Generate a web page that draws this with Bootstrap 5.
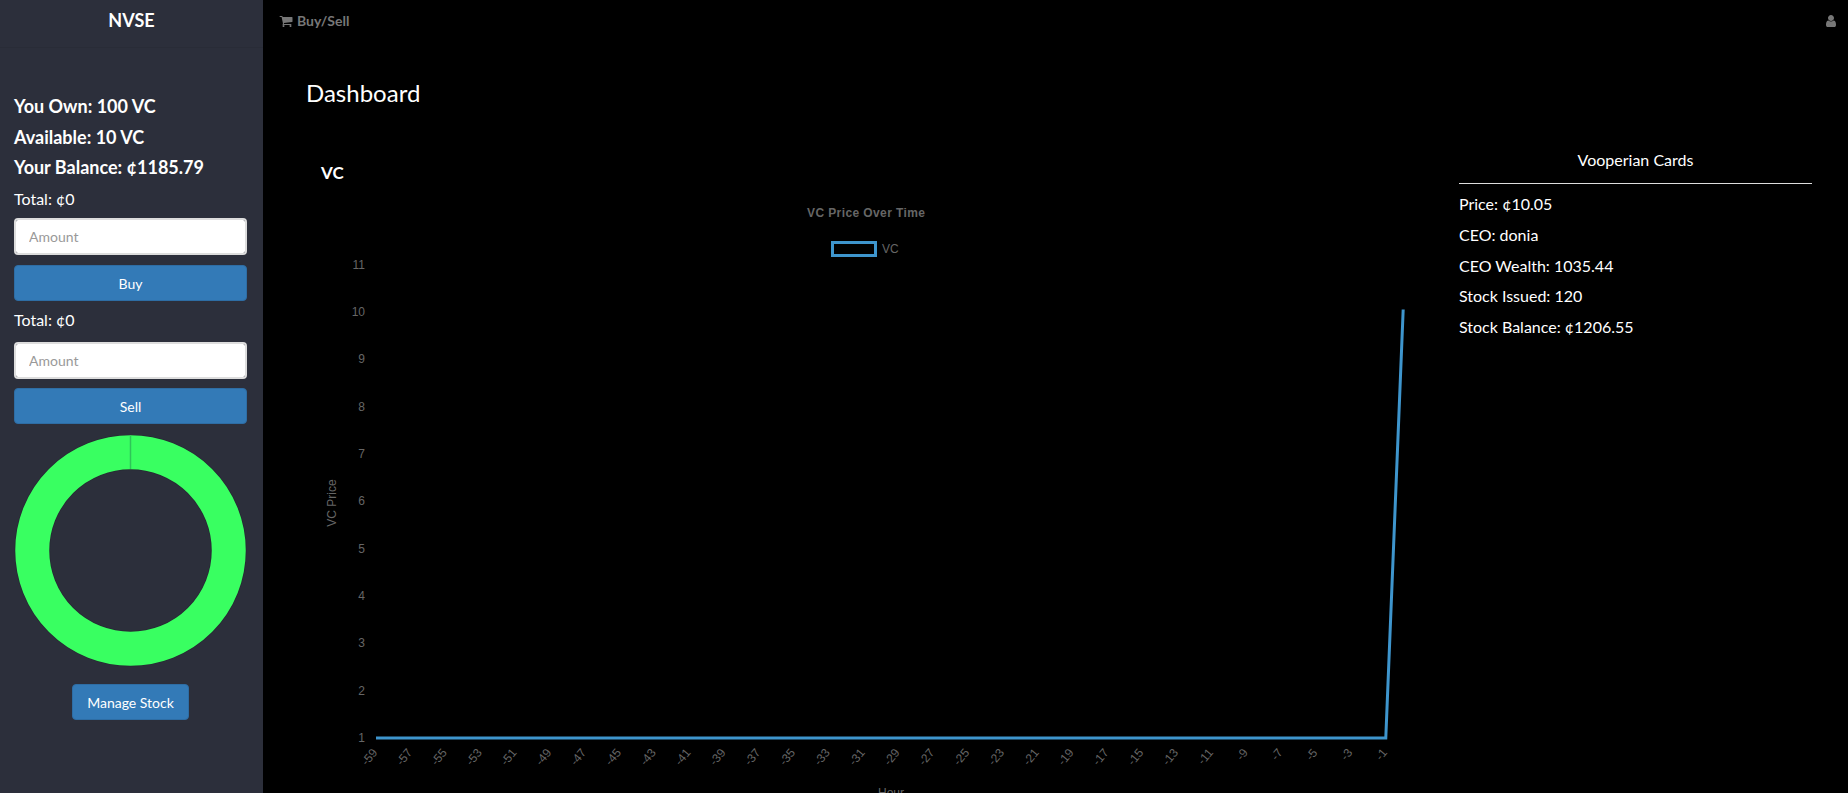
<!DOCTYPE html>
<html lang="en">
<head>
  <meta charset="UTF-8">
  <meta name="viewport" content="width=device-width, initial-scale=1.0">
  <title>NVSE Dashboard</title>
  <link href="https://cdn.jsdelivr.net/npm/bootstrap@5.3.0/dist/css/bootstrap.min.css" rel="stylesheet">
  <style>
    html, body {
      height: 100%;
      overflow: hidden;
    }
    body {
      font-family: "Lato", "Liberation Sans", sans-serif;
      font-size: 16px;
      background: #000;
      color: #fff;
    }
    .side-panel {
      width: 263px;
      flex: none;
      height: 793px;
      background: #2c2f3b;
    }
    .side-brand {
      height: 48px;
      line-height: 41px;
      font-size: 18px;
      font-weight: 700;
      border-bottom: 1px solid #292c37;
    }
    .side-body {
      padding: 43px 16px 0 14px;
    }
    .own-line {
      font-size: 18px;
      font-weight: 700;
      line-height: 30.7px;
    }
    .total-line {
      line-height: 31px;
      margin-bottom: 4px;
    }
    .total-next {
      margin-top: 3px;
      margin-bottom: 7px;
    }
    .side-body .form-control {
      height: 37px;
      border: 2px solid #ddd;
      border-radius: 4px;
      font-size: 14px;
      padding: 6px 13px;
      margin-bottom: 9px;
    }
    .side-body .buy-input {
      margin-bottom: 10px;
    }
    .side-body .form-control::placeholder {
      color: #999;
    }
    .btn-blue {
      background: #337ab7;
      border: 1px solid #2e6da4;
      border-radius: 4px;
      color: #fff;
      font-size: 14px;
      height: 36px;
      padding: 0 12px;
    }
    .btn-blue:hover {
      background: #286090;
      color: #fff;
    }
    .btn-manage {
      padding: 0 14px;
    }
    .donut-box {
      margin-top: 11px;
      height: 232px;
    }
    .manage-row {
      margin-top: 17px;
    }
    .top-strip {
      height: 47px;
      padding: 0 10px 6px 16px;
      color: #777;
      font-size: 14px;
      font-weight: 700;
    }
    .top-strip svg {
      fill: #777;
    }
    .page-title {
      font-size: 24px;
      font-weight: 400;
      line-height: 32px;
      margin: 30px 0 0 43px;
    }
    .chart-col {
      width: 1196px;
      flex: none;
    }
    .stock-name {
      font-size: 17px;
      font-weight: 700;
      line-height: 24px;
      margin: 52px 0 0 58px;
    }
    .info-col {
      width: 353px;
      flex: none;
      margin-top: 36px;
    }
    .info-head {
      line-height: 30px;
      padding-bottom: 8px;
      border-bottom: 1px solid #ddd;
      margin-bottom: 5px;
    }
    .info-line {
      line-height: 30.8px;
    }
    .chart-svg {
      display: block;
      margin-top: 2px;
      font-family: "Liberation Sans", sans-serif;
    }
  </style>
</head>
<body>
  <div class="d-flex">
    <div class="side-panel">
      <div class="side-brand text-center">NVSE</div>
      <div class="side-body">
        <div class="own-line">You Own: 100 VC</div>
        <div class="own-line">Available: 10 VC</div>
        <div class="own-line">Your Balance: ¢1185.79</div>
        <div class="total-line">Total: ¢0</div>
        <input type="text" class="form-control buy-input" placeholder="Amount">
        <button class="btn btn-blue w-100">Buy</button>
        <div class="total-line total-next">Total: ¢0</div>
        <input type="text" class="form-control" placeholder="Amount">
        <button class="btn btn-blue w-100">Sell</button>
        <div class="donut-box">
          <svg width="233" height="232" viewBox="0 0 233 232">
            <circle cx="116.500" cy="115.500" r="98.250" fill="none" stroke="#262a33" stroke-width="35.500"/>
            <circle cx="116.500" cy="115.500" r="98.250" fill="none" stroke="#39ff61" stroke-width="34"/>
            <line x1="116.500" y1="1" x2="116.500" y2="34" stroke="#2fc458" stroke-width="1.500"/>
          </svg>
        </div>
        <div class="text-center manage-row">
          <button class="btn btn-blue btn-manage">Manage Stock</button>
        </div>
      </div>
    </div>
    <div class="flex-grow-1">
      <div class="top-strip d-flex align-items-center justify-content-between">
        <div class="d-flex align-items-center gap-1">
          <svg width="14" height="14" viewBox="0 0 1792 1792"><path d="M704 1536q0 52-38 90t-90 38-90-38-38-90 38-90 90-38 90 38 38 90zm896 0q0 52-38 90t-90 38-90-38-38-90 38-90 90-38 90 38 38 90zm128-1088v512q0 24-16.500 42.500t-40.500 21.500l-1044 122q13 60 13 70 0 16-24 64h920q26 0 45 19t19 45-19 45-45 19h-1024q-26 0-45-19t-19-45q0-11 8-31.500t16-36 21.500-40 15.500-29.500l-177-823h-204q-26 0-45-19t-19-45 19-45 45-19h256q16 0 28.500 6.500t19.500 15.500 13 24.500 8 26 5.500 29.500 4.500 26h1201q26 0 45 19t19 45z"/></svg>
          <span>Buy/Sell</span>
        </div>
        <svg width="14" height="14" viewBox="0 0 1792 1792"><path d="M1536 1399q0 109-62.500 187t-150.500 78h-854q-88 0-150.500-78t-62.500-187q0-85 8.500-160.500t31.500-152 58.500-131 94-89 134.500-34.500q131 128 313 128t313-128q76 0 134.500 34.500t94 89 58.500 131 31.500 152 8.500 160.500zm-256-887q0 159-112.500 271.500t-271.500 112.500-271.500-112.500-112.500-271.500 112.500-271.500 271.500-112.500 271.500 112.500 112.500 271.500z"/></svg>
      </div>
      <h1 class="page-title">Dashboard</h1>
      <div class="d-flex">
        <div class="chart-col">
          <div class="stock-name">VC</div>
          <svg id="priceChart" class="chart-svg" width="1196" height="620" viewBox="263 186 1196 620"></svg>
        </div>
        <div class="info-col">
          <div class="info-head text-center">Vooperian Cards</div>
          <div class="info-line">Price: ¢10.05</div>
          <div class="info-line">CEO: donia</div>
          <div class="info-line">CEO Wealth: 1035.44</div>
          <div class="info-line">Stock Issued: 120</div>
          <div class="info-line">Stock Balance: ¢1206.55</div>
        </div>
      </div>
    </div>
  </div>

  <script>
    // chart drawn by hand, coordinates are page pixels (see viewBox)
    const svg = document.getElementById("priceChart");
    const xOf = h => 376 + (h + 59) * 17.41;
    const yOf = v => 737 - (v - 1) * 47.35;
    let out = "";

    function label(x, y, txt, extra) {
      out += `<text x="${x}" y="${y}" font-size="12" fill="#666" ${extra || ""}>${txt}</text>`;
    }

    // y ticks
    for (let v = 1; v <= 11; v++) {
      label(365, yOf(v) + 4, v, 'text-anchor="end"');
    }

    // x ticks, every 2 hours
    for (let h = -59; h <= -1; h += 2) {
      const x = xOf(h) + 2;
      const y = 752;
      label(x, y, h, `text-anchor="end" transform="rotate(-50 ${x} ${y})"`);
    }

    label(866, 216, "VC Price Over Time", 'text-anchor="middle" font-weight="700" textLength="118"');
    label(882, 252, "VC");
    label(336, 502, "VC Price", 'text-anchor="middle" transform="rotate(-90 336 502)"');
    label(891, 796, "Hour", 'text-anchor="middle"');

    // legend box
    out += '<rect x="832.500" y="241.500" width="43" height="13" fill="none" stroke="#3e95cd" stroke-width="3"/>';

    // data line: flat at 1 until -1, then up to the current price
    out += `<polyline fill="none" stroke="#3e95cd" stroke-width="3" points="${xOf(-59)},${yOf(1)} ${xOf(-1)},${yOf(1)} ${xOf(0)},${yOf(10.05)}"/>`;

    svg.innerHTML = out;
  </script>
  <script src="https://cdn.jsdelivr.net/npm/bootstrap@5.3.0/dist/js/bootstrap.bundle.min.js"></script>
</body>
</html>
